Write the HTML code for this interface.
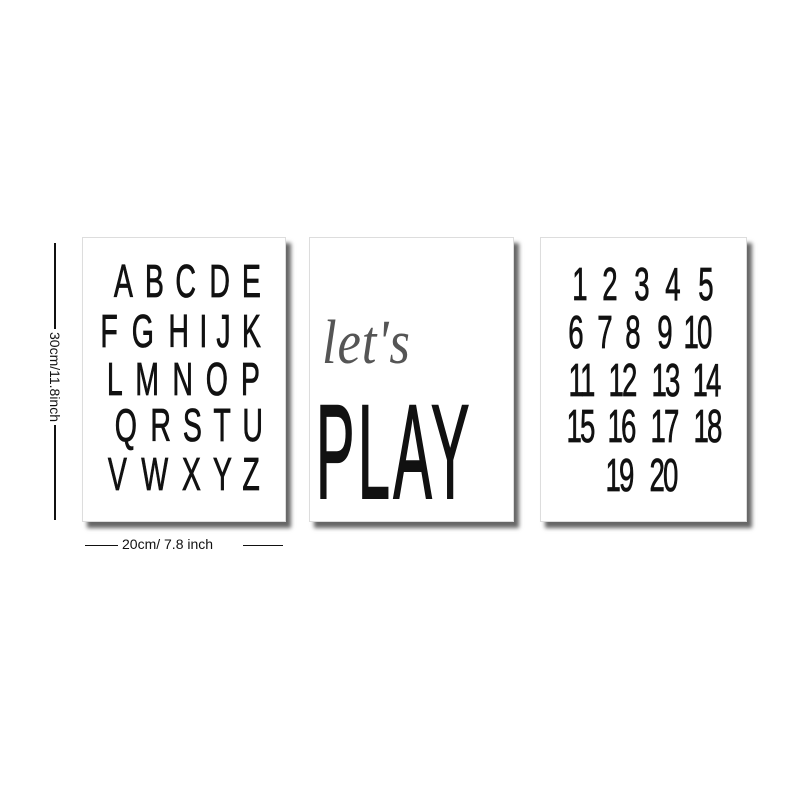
<!DOCTYPE html>
<html><head><style>
body{margin:0;width:800px;height:800px;background:#fff;position:relative;overflow:hidden;font-family:"Liberation Sans",sans-serif}
.p{position:absolute;top:237px;height:283px;background:#fff;border:1px solid #ddd;box-shadow:5px 6px 4px rgba(0,0,0,.6)}
.r{position:absolute;display:flex;justify-content:space-between;font-family:"Liberation Sans Narrow","Liberation Sans",sans-serif;font-size:46px;line-height:46px;color:#111;-webkit-text-stroke:0.8px #111}
.r span{display:inline-block;transform:scaleX(.62);transform-origin:center}
.n{position:absolute;font-family:"Liberation Sans Narrow","Liberation Sans",sans-serif;font-size:46px;line-height:46px;color:#111;transform:translateX(-50%) scaleX(.6);letter-spacing:-3px;white-space:nowrap;-webkit-text-stroke:0.8px #111}
.ln{position:absolute;background:#111}
</style></head><body>
<div class="p" style="left:82px;width:202px"></div>
<div class="p" style="left:309px;width:203px"></div>
<div class="p" style="left:540px;width:205px"></div>

<div class="r" style="left:108px;width:145px;top:258px"><span>A</span><span>B</span><span>C</span><span>D</span><span>E</span></div>
<div class="r" style="left:95px;width:172px;top:308px"><span>F</span><span>G</span><span>H</span><span>I</span><span>J</span><span>K</span></div>
<div class="r" style="left:102px;width:152px;top:356px"><span>L</span><span>M</span><span>N</span><span>O</span><span>P</span></div>
<div class="r" style="left:108px;width:145px;top:402px"><span>Q</span><span>R</span><span>S</span><span>T</span><span>U</span></div>
<div class="r" style="left:102px;width:154px;top:451px"><span>V</span><span>W</span><span>X</span><span>Y</span><span>Z</span></div>

<div style="position:absolute;left:322px;top:308px;font-family:'Liberation Serif',serif;font-style:italic;font-size:62px;color:#555;letter-spacing:1px;transform:scaleX(.85);transform-origin:left">let's</div>
<div style="position:absolute;left:316px;top:386px;font-family:'Liberation Sans Narrow','Liberation Sans',sans-serif;font-size:134px;line-height:134px;color:#111;transform:scaleX(.43);transform-origin:left;letter-spacing:8px;-webkit-text-stroke:2px #111">PLAY</div>

<div class="n" style="left:579px;top:261px">1</div>
<div class="n" style="left:609px;top:261px">2</div>
<div class="n" style="left:641px;top:261px">3</div>
<div class="n" style="left:672px;top:261px">4</div>
<div class="n" style="left:705px;top:261px">5</div>
<div class="n" style="left:575px;top:309px">6</div>
<div class="n" style="left:604px;top:309px">7</div>
<div class="n" style="left:632px;top:309px">8</div>
<div class="n" style="left:664px;top:309px">9</div>
<div class="n" style="left:697px;top:309px">10</div>
<div class="n" style="left:581px;top:357px">11</div>
<div class="n" style="left:622px;top:357px">12</div>
<div class="n" style="left:665px;top:357px">13</div>
<div class="n" style="left:706px;top:357px">14</div>
<div class="n" style="left:580px;top:403px">15</div>
<div class="n" style="left:621px;top:403px">16</div>
<div class="n" style="left:664px;top:403px">17</div>
<div class="n" style="left:707px;top:403px">18</div>
<div class="n" style="left:619px;top:452px">19</div>
<div class="n" style="left:663px;top:452px">20</div>

<div class="ln" style="left:54px;top:243px;width:2px;height:277px"></div>
<div style="position:absolute;left:55px;top:377px;transform:translate(-50%,-50%) rotate(90deg);background:#fff;padding:0 3px;font-size:14px;color:#111;white-space:nowrap">30cm/11.8inch</div>
<div class="ln" style="left:85px;top:545px;width:33px;height:1px"></div>
<div class="ln" style="left:243px;top:545px;width:40px;height:1px"></div>
<div style="position:absolute;left:122px;top:536px;font-size:14px;color:#111;white-space:nowrap">20cm/ 7.8 inch</div>
</body></html>
